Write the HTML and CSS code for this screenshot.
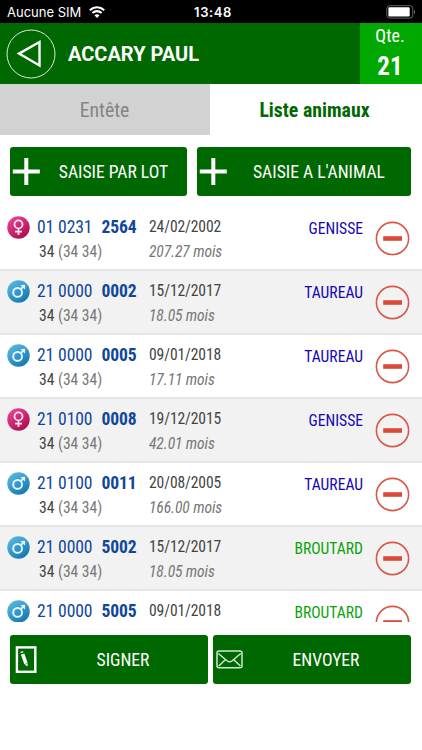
FILE: index.html
```html
<!DOCTYPE html>
<html lang="fr">
  <head>
    <meta charset="UTF-8">
    <meta name="viewport" content="width=device-width, initial-scale=1.0">
    <title>Liste animaux</title>
    <link rel="stylesheet" href="styles.css">
  </head>
  <body>
    <svg width="0" height="0" class="defs">
        <defs>
            <linearGradient id="pink" x1="0" y1="0" x2="0.7" y2="1">
                <stop offset="0" stop-color="#ea4d9b" />
                <stop offset="1" stop-color="#ae0c50" />
            </linearGradient>
            <linearGradient id="blue" x1="0" y1="0" x2="0.7" y2="1">
                <stop offset="0" stop-color="#5cc3e8" />
                <stop offset="1" stop-color="#1478ae" />
            </linearGradient>
        </defs>
        <symbol id="female" viewBox="0 0 23 23">
            <circle cx="11.5" cy="11.5" r="11.2" fill="url(#pink)" />
            <g fill="none" stroke="#fbe3ee" stroke-width="1.8">
                <circle cx="11.5" cy="8.4" r="4" />
                <path d="M11.5 12.4V19M8 15.6H15" />
            </g>
        </symbol>
        <symbol id="male" viewBox="0 0 23 23">
            <circle cx="11.5" cy="11.5" r="11.2" fill="url(#blue)" />
            <g fill="none" stroke="#e2f5fc" stroke-width="2">
                <circle cx="10.6" cy="12.4" r="4.4" />
                <path d="M13.7 9.2L16 6.9" />
            </g>
            <path d="M13.4 4.9L18.3 4.7L18 9.4Z" fill="#e2f5fc" />
        </symbol>
        <symbol id="remove" viewBox="0 0 36 36">
            <circle cx="17.5" cy="17.5" r="16.1" fill="none" stroke="#dc5549" stroke-width="1.6" />
            <path d="M8.2 17.5H27" stroke="#d94a3d" stroke-width="4.6" />
        </symbol>
        <symbol id="plus" viewBox="0 0 28 28">
            <path d="M.8 13.5H27.8M14.3 0V27" stroke="#fff" stroke-width="4" />
        </symbol>
    </svg>

    <div id="status">
        <div class="carrier">
            <span>Aucune SIM</span>
            <svg width="16" height="12" viewBox="0 0 16 12">
                <g fill="none" stroke="#fff" stroke-width="2.1">
                    <path d="M.8 4.2C5 .3 11 .3 15.2 4.2" />
                    <path d="M3.4 7C6 4.5 10 4.5 12.6 7" />
                </g>
                <path d="M8 12L5.4 9.2C7 7.8 9 7.8 10.6 9.2Z" fill="#fff" />
            </svg>
        </div>
        <span class="time">13:48</span>
        <svg class="battery" width="30" height="14" viewBox="0 0 30 14">
            <rect x=".8" y=".7" width="26" height="12.4" rx="3" fill="none" stroke="#666" />
            <rect x="2.4" y="2.3" width="21.3" height="9.2" rx="1.2" fill="#fff" />
            <path d="M28 4.7C29.6 5.6 29.6 8.2 28 9.1Z" fill="#666" />
        </svg>
    </div>

    <div id="header">
        <svg class="back" width="50" height="50" viewBox="0 0 50 50">
            <circle cx="25" cy="25" r="24" fill="none" stroke="#d8e8d8" stroke-width="1" />
            <path d="M13 24.6L33.5 13V36.5Z" fill="none" stroke="#fff" stroke-width="2.4" />
        </svg>
        <h1>ACCARY PAUL</h1>
        <div class="quantity">
            <span>Qte.</span>
            <strong>21</strong>
        </div>
    </div>

    <div id="tabs">
        <div class="tab">Entête</div>
        <div class="tab active">Liste animaux</div>
    </div>

    <div class="buttons top">
        <div class="button">
            <svg width="28" height="28"><use href="#plus" /></svg>
            <span>SAISIE PAR LOT</span>
        </div>
        <div class="button">
            <svg width="28" height="28"><use href="#plus" /></svg>
            <span>SAISIE A L'ANIMAL</span>
        </div>
    </div>

    <div id="list">
        <div class="row">
            <svg class="sex"><use href="#female" /></svg>
            <div class="animal">
                <div class="number">01 0231 <b>2564</b></div>
                <div class="breed">34 <span>(34 34)</span></div>
            </div>
            <div class="birth">
                <div class="date">24/02/2002</div>
                <div class="age">207.27 mois</div>
            </div>
            <div class="type">GENISSE</div>
            <svg class="remove"><use href="#remove" /></svg>
        </div>
        <div class="row">
            <svg class="sex"><use href="#male" /></svg>
            <div class="animal">
                <div class="number">21 0000 <b>0002</b></div>
                <div class="breed">34 <span>(34 34)</span></div>
            </div>
            <div class="birth">
                <div class="date">15/12/2017</div>
                <div class="age">18.05 mois</div>
            </div>
            <div class="type">TAUREAU</div>
            <svg class="remove"><use href="#remove" /></svg>
        </div>
        <div class="row">
            <svg class="sex"><use href="#male" /></svg>
            <div class="animal">
                <div class="number">21 0000 <b>0005</b></div>
                <div class="breed">34 <span>(34 34)</span></div>
            </div>
            <div class="birth">
                <div class="date">09/01/2018</div>
                <div class="age">17.11 mois</div>
            </div>
            <div class="type">TAUREAU</div>
            <svg class="remove"><use href="#remove" /></svg>
        </div>
        <div class="row">
            <svg class="sex"><use href="#female" /></svg>
            <div class="animal">
                <div class="number">21 0100 <b>0008</b></div>
                <div class="breed">34 <span>(34 34)</span></div>
            </div>
            <div class="birth">
                <div class="date">19/12/2015</div>
                <div class="age">42.01 mois</div>
            </div>
            <div class="type">GENISSE</div>
            <svg class="remove"><use href="#remove" /></svg>
        </div>
        <div class="row">
            <svg class="sex"><use href="#male" /></svg>
            <div class="animal">
                <div class="number">21 0100 <b>0011</b></div>
                <div class="breed">34 <span>(34 34)</span></div>
            </div>
            <div class="birth">
                <div class="date">20/08/2005</div>
                <div class="age">166.00 mois</div>
            </div>
            <div class="type">TAUREAU</div>
            <svg class="remove"><use href="#remove" /></svg>
        </div>
        <div class="row">
            <svg class="sex"><use href="#male" /></svg>
            <div class="animal">
                <div class="number">21 0000 <b>5002</b></div>
                <div class="breed">34 <span>(34 34)</span></div>
            </div>
            <div class="birth">
                <div class="date">15/12/2017</div>
                <div class="age">18.05 mois</div>
            </div>
            <div class="type young">BROUTARD</div>
            <svg class="remove"><use href="#remove" /></svg>
        </div>
        <div class="row">
            <svg class="sex"><use href="#male" /></svg>
            <div class="animal">
                <div class="number">21 0000 <b>5005</b></div>
            </div>
            <div class="birth">
                <div class="date">09/01/2018</div>
            </div>
            <div class="type young">BROUTARD</div>
            <svg class="remove"><use href="#remove" /></svg>
        </div>
    </div>

    <div class="buttons bottom">
        <div class="button">
            <svg width="28" height="28" viewBox="0 0 28 28">
                <rect x="4.9" y="1.4" width="18.4" height="24.4" fill="none" stroke="#fff" stroke-width="2.4" />
                <path d="M10.6 8L14 17.6" stroke="#fff" stroke-width="3.6" />
                <path d="M12.6 18.6L15.8 17.4L15.4 20.6Z" fill="#fff" />
                <path d="M8.6 6.6L11.2 5.6" stroke="#fff" stroke-width="1.2" />
            </svg>
            <span>SIGNER</span>
        </div>
        <div class="button">
            <svg width="28" height="28" viewBox="0 0 28 28">
                <g fill="none" stroke="#cfe6cf" stroke-width="1.5">
                    <rect x="2" y="5.1" width="25" height="16.6" rx="2" />
                    <path d="M3.3 7.5L12.3 15Q14.6 16.7 16.9 15L25.8 7.5M3.8 20L10.3 13.7M25.4 20L18.8 13.7" />
                </g>
            </svg>
            <span>ENVOYER</span>
        </div>
    </div>
  </body>
</html>
```
FILE: styles.css
```css
body {
    margin: 0;
    height: 750px;
    overflow: hidden;
    background-color: #fff;
    font-family: "Roboto Condensed", Roboto, sans-serif;
    font-stretch: 75%;
    display: flex;
    flex-direction: column;
}

.defs {
    position: absolute;
}

#status {
    height: 23px;
    box-sizing: border-box;
    padding: 0 6px 0 7px;
    background: #000;
    color: #fff;
    font-family: Inter, sans-serif;
    font-stretch: normal;
    font-size: 13px;
    display: grid;
    grid-template-columns: 1fr auto 1fr;
    align-items: center;
}

.carrier {
    display: flex;
    align-items: center;
    gap: 8px;
}

.time {
    padding-left: 3px;
    font-weight: 600;
    letter-spacing: 0.6px;
}

.battery {
    justify-self: end;
}

#header {
    height: 61px;
    background: #006800;
    color: #fff;
    display: flex;
    align-items: center;
}

.back {
    margin-left: 6px;
}

h1 {
    margin: 0 0 0 12px;
    font-family: Roboto, sans-serif;
    font-size: 20px;
    font-weight: bold;
    font-stretch: normal;
    flex: 1;
}

.quantity {
    width: 62px;
    height: 61px;
    background: #00a800;
    display: flex;
    flex-direction: column;
    align-items: center;
    font-size: 18px;
    line-height: 26px;
}

.quantity span,
.quantity strong {
    margin-right: 2px;
}

.quantity strong {
    font-size: 25px;
    line-height: 36px;
}

#tabs {
    display: flex;
    height: 51px;
}

.tab {
    width: 209px;
    padding-right: 1px;
    background: #d2d2d2;
    color: #858585;
    font-size: 19.8px;
    line-height: 53px;
    text-align: center;
}

.tab.active {
    background: #fff;
    color: #006800;
    font-weight: bold;
}

.buttons {
    display: grid;
    padding: 0 11px 0 10px;
}

.top {
    grid-template-columns: 177px 1fr;
    gap: 10px;
    margin-top: 12px;
}

.bottom {
    grid-template-columns: 1fr 1fr;
    gap: 5px;
    margin-top: 13px;
}

.button {
    height: 49px;
    box-sizing: border-box;
    padding-left: 2px;
    border-radius: 3px;
    background: #006800;
    color: #fff;
    font-size: 17.6px;
    display: flex;
    align-items: center;
}

.button span {
    flex: 1;
    text-align: center;
}

.bottom .button span {
    padding-right: 2px;
}

#list {
    height: 415px;
    margin-top: 11px;
    overflow: hidden;
}

.row {
    height: 64px;
    box-sizing: border-box;
    padding-left: 7px;
    border-bottom: 2px solid #e5e5e5;
    display: flex;
}

.row:nth-child(even) {
    background: #f2f2f2;
}

.sex {
    width: 23px;
    height: 23px;
    margin-top: 9px;
}

.animal {
    width: 112px;
    margin-left: 7px;
}

.number {
    margin-top: 8px;
    color: #10479b;
    font-size: 17.6px;
    letter-spacing: -0.1px;
    line-height: 24px;
}

.number b {
    margin-left: 5px;
}

.breed {
    margin-left: 2px;
    color: #444;
    font-size: 15.6px;
    line-height: 26px;
}

.breed span {
    color: #777;
}

.birth {
    flex: 1;
    font-size: 15.6px;
    letter-spacing: -0.1px;
}

.date {
    margin-top: 8px;
    color: #444;
    line-height: 24px;
}

.age {
    color: #777;
    font-style: italic;
    line-height: 26px;
}

.type {
    margin-top: 10px;
    color: #1406b4;
    font-size: 15.6px;
    line-height: 25px;
}

.type.young {
    color: #0aa30a;
}

.remove {
    width: 36px;
    height: 36px;
    margin: 14px 11px 0 12px;
}
```
